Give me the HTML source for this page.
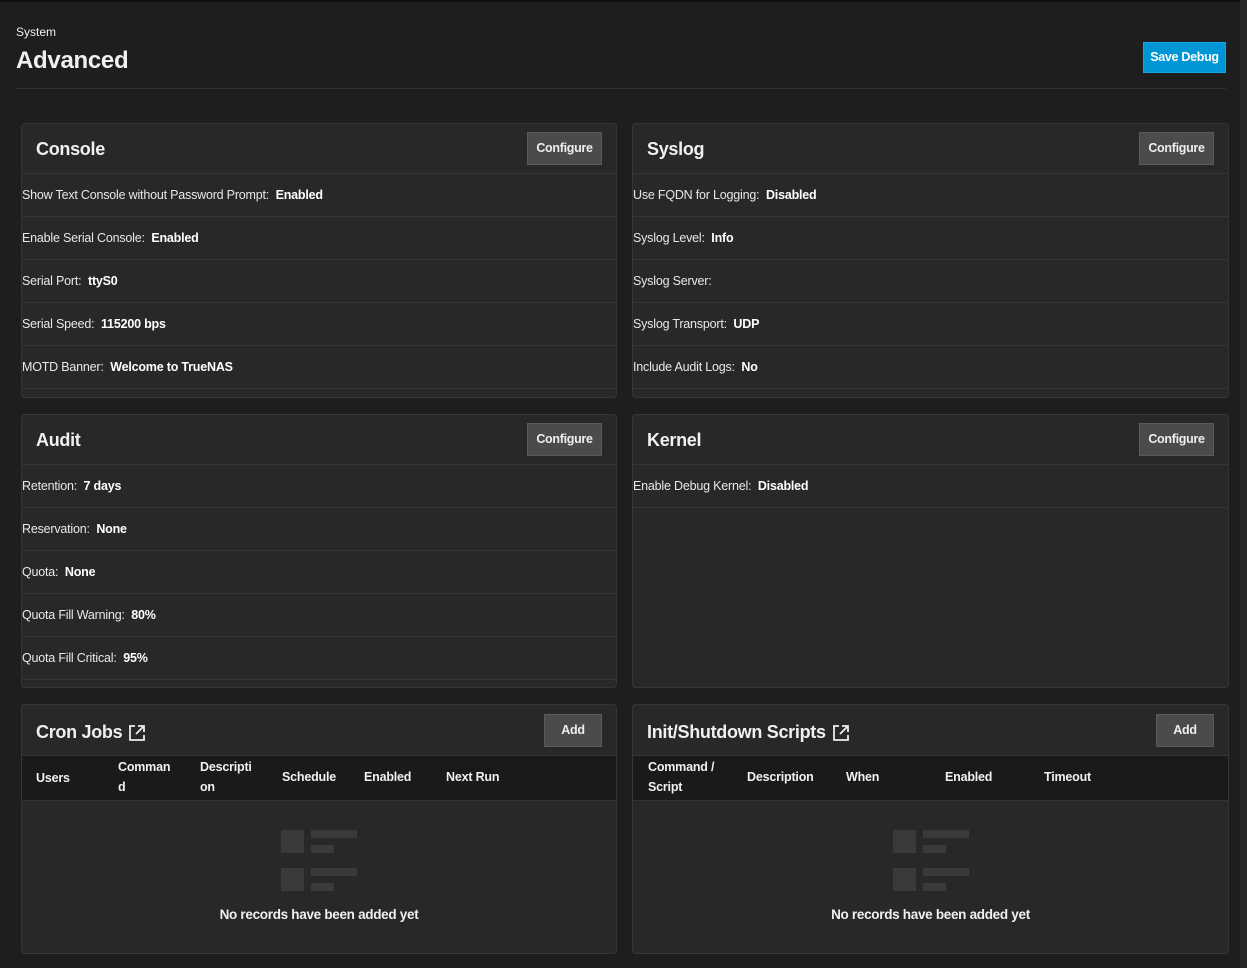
<!DOCTYPE html>
<html><head><meta charset="utf-8"><style>
*{box-sizing:border-box;margin:0;padding:0}
body{width:1247px;height:968px;background:#1e1e1e;font-family:"Liberation Sans",sans-serif;color:#f0f0f0;position:relative;overflow:hidden}
.top{position:absolute;left:0;top:0;width:1247px;height:2px;background:#111}
.sb{position:absolute;right:0;top:0;width:7px;height:968px;background:#262626}
.crumb{position:absolute;left:16px;top:25px;font-size:12px}
h1{position:absolute;left:16px;top:47px;font-size:24px;font-weight:bold;letter-spacing:-0.3px}
.hr{position:absolute;left:16px;top:88px;width:1210px;height:1px;background:#333}
.save{position:absolute;left:1143px;top:42px;width:83px;height:31px;background:#0095d5;border:1px solid #14a6e6;font-size:12.5px;font-weight:bold;color:#fff;text-align:center;line-height:29px;letter-spacing:-0.3px}
.card{position:absolute;background:#282828;border:1px solid #363636;border-radius:4px;overflow:hidden}
.card .hd{height:50px;border-bottom:1px solid #363636;position:relative}
.card .t{position:absolute;left:14px;top:15px;font-size:18px;font-weight:bold;letter-spacing:-0.3px;display:flex;align-items:center;gap:6px}
.btn{position:absolute;right:14px;top:8px;height:33px;background:#4b4b4b;border:1px solid #5a5a5a;font-size:12.5px;font-weight:bold;color:#eee;text-align:center;line-height:31px;letter-spacing:-0.3px}
.row{height:43px;border-bottom:1px solid #363636;font-size:12.5px;line-height:42px;padding-left:0;letter-spacing:-0.2px;color:#e8e8e8}
.row b{color:#fff}
.th{height:45px;background:#1a1a1a;border-bottom:1px solid #333;position:relative;font-size:12.5px;font-weight:bold;letter-spacing:-0.2px}
.th span{position:absolute;line-height:20px}
.ic{position:absolute;background:#3a3a3a}
.msg{position:absolute;width:100%;text-align:center;top:202px;font-size:13.5px;font-weight:bold;letter-spacing:-0.3px}
</style></head><body>
<div class="top"></div><div class="sb"></div>
<div class="crumb">System</div>
<h1>Advanced</h1>
<div class="save">Save Debug</div>
<div class="hr"></div>

<div class="card" style="left:21px;top:123px;width:596px;height:275px">
<div class="hd"><div class="t">Console</div><div class="btn" style="width:75px">Configure</div></div>
<div class="row">Show Text Console without Password Prompt:&nbsp; <b>Enabled</b></div>
<div class="row">Enable Serial Console:&nbsp; <b>Enabled</b></div>
<div class="row">Serial Port:&nbsp; <b>ttyS0</b></div>
<div class="row">Serial Speed:&nbsp; <b>115200 bps</b></div>
<div class="row">MOTD Banner:&nbsp; <b>Welcome to TrueNAS</b></div>
</div>

<div class="card" style="left:632px;top:123px;width:597px;height:275px">
<div class="hd"><div class="t">Syslog</div><div class="btn" style="width:75px">Configure</div></div>
<div class="row">Use FQDN for Logging:&nbsp; <b>Disabled</b></div>
<div class="row">Syslog Level:&nbsp; <b>Info</b></div>
<div class="row">Syslog Server:&nbsp; <b></b></div>
<div class="row">Syslog Transport:&nbsp; <b>UDP</b></div>
<div class="row">Include Audit Logs:&nbsp; <b>No</b></div>
</div>

<div class="card" style="left:21px;top:414px;width:596px;height:274px">
<div class="hd"><div class="t">Audit</div><div class="btn" style="width:75px">Configure</div></div>
<div class="row">Retention:&nbsp; <b>7 days</b></div>
<div class="row">Reservation:&nbsp; <b>None</b></div>
<div class="row">Quota:&nbsp; <b>None</b></div>
<div class="row">Quota Fill Warning:&nbsp; <b>80%</b></div>
<div class="row">Quota Fill Critical:&nbsp; <b>95%</b></div>
</div>

<div class="card" style="left:632px;top:414px;width:597px;height:274px">
<div class="hd"><div class="t">Kernel</div><div class="btn" style="width:75px">Configure</div></div>
<div class="row">Enable Debug Kernel:&nbsp; <b>Disabled</b></div>
</div>

<div class="card" style="left:21px;top:704px;width:596px;height:250px">
<div class="hd" style="height:51px"><div class="t" style="top:17px">Cron Jobs <svg width="18" height="18" viewBox="0 0 18 18"><path d="M7 2H2v14h14v-5M10 2h6v6M16 2L8 10" fill="none" stroke="#eee" stroke-width="1.8"/></svg></div><div class="btn" style="width:58px;top:9px">Add</div></div>
<div class="th">
<span style="left:14px;top:12px">Users</span>
<span style="left:96px;top:1px">Comman<br>d</span>
<span style="left:178px;top:1px">Descripti<br>on</span>
<span style="left:260px;top:11px">Schedule</span>
<span style="left:342px;top:11px">Enabled</span>
<span style="left:424px;top:11px">Next Run</span>
</div>
<div class="ic" style="left:259px;top:125px;width:23px;height:23px"></div>
<div class="ic" style="left:289px;top:125px;width:46px;height:8px"></div>
<div class="ic" style="left:289px;top:140px;width:23px;height:8px"></div>
<div class="ic" style="left:259px;top:163px;width:23px;height:23px"></div>
<div class="ic" style="left:289px;top:163px;width:46px;height:8px"></div>
<div class="ic" style="left:289px;top:178px;width:23px;height:8px"></div>
<div class="msg">No records have been added yet</div>
</div>

<div class="card" style="left:632px;top:704px;width:597px;height:250px">
<div class="hd" style="height:51px"><div class="t" style="top:17px">Init/Shutdown Scripts <svg width="18" height="18" viewBox="0 0 18 18"><path d="M7 2H2v14h14v-5M10 2h6v6M16 2L8 10" fill="none" stroke="#eee" stroke-width="1.8"/></svg></div><div class="btn" style="width:58px;top:9px">Add</div></div>
<div class="th">
<span style="left:15px;top:1px">Command /<br>Script</span>
<span style="left:114px;top:11px">Description</span>
<span style="left:213px;top:11px">When</span>
<span style="left:312px;top:11px">Enabled</span>
<span style="left:411px;top:11px">Timeout</span>
</div>
<div class="ic" style="left:260px;top:125px;width:23px;height:23px"></div>
<div class="ic" style="left:290px;top:125px;width:46px;height:8px"></div>
<div class="ic" style="left:290px;top:140px;width:23px;height:8px"></div>
<div class="ic" style="left:260px;top:163px;width:23px;height:23px"></div>
<div class="ic" style="left:290px;top:163px;width:46px;height:8px"></div>
<div class="ic" style="left:290px;top:178px;width:23px;height:8px"></div>
<div class="msg">No records have been added yet</div>
</div>
</body></html>
